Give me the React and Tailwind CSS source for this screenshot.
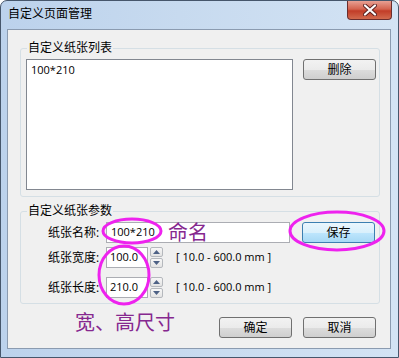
import React from "react";

const font = { fontFamily: '"Open Sans","Noto Sans CJK SC",sans-serif' };

function Btn({ children, primary, className = "" }) {
  return (
    <div
      className={
        "flex items-center justify-center rounded-[3px] border text-[12px] text-black " +
        (primary
          ? "border-[#3c7fb1] bg-[linear-gradient(#eaf6fd_0%,#d9f0fc_50%,#bee6fd_51%,#a7d9f5_100%)] "
          : "border-[#707070] bg-[linear-gradient(#f2f2f2_0%,#ebebeb_50%,#dddddd_51%,#cfcfcf_100%)] ") +
        className
      }
    >
      <span className="leading-none">{children}</span>
    </div>
  );
}

function Spinner() {
  return (
    <div className="ml-[2px] flex h-[21px] w-[13px] flex-col gap-[1px]">
      <div className="flex h-[10px] items-center justify-center rounded-[2px] border border-[#b5b8bd] bg-[linear-gradient(#f7f7f7,#e3e3e3)]">
        <svg width="7" height="4" viewBox="0 0 7 4">
          <path d="M0 4 L3.5 0 L7 4 Z" fill="#4d6185" />
        </svg>
      </div>
      <div className="flex h-[10px] items-center justify-center rounded-[2px] border border-[#b5b8bd] bg-[linear-gradient(#f7f7f7,#e3e3e3)]">
        <svg width="7" height="4" viewBox="0 0 7 4">
          <path d="M0 0 L3.5 4 L7 0 Z" fill="#4d6185" />
        </svg>
      </div>
    </div>
  );
}

function Row({ label, children, className = "" }) {
  return (
    <div className={"flex items-center pl-[27px] " + className}>
      <div className="w-[58px] text-[12px] leading-none text-black">{label}</div>
      {children}
    </div>
  );
}

export default function App() {
  return (
    <div className="relative h-[358px] w-[399px] overflow-hidden bg-white" style={font}>
      <div className="flex h-full flex-col rounded-t-[7px] border border-[#46566b] bg-[linear-gradient(90deg,#bcd2ec_0%,#c7daef_45%,#d3e3f4_100%)]">
        <div className="flex h-[28px] items-start justify-between">
          <div className="pl-[7px] pt-[6px] text-[12px] leading-[14px] text-black">自定义页面管理</div>
          <div className="mr-[6px] flex h-[19px] w-[45px] items-center justify-center rounded-b-[4px] border border-t-0 border-[#6b2d2d] bg-[linear-gradient(#e8a093_0%,#d4634f_45%,#c23d28_55%,#d26a4e_100%)]">
            <svg width="14" height="12" viewBox="0 0 14 12">
              <path d="M2 1.5 L12 10.5 M12 1.5 L2 10.5" stroke="#5a2020" strokeWidth="4" strokeLinecap="round" />
              <path d="M2 1.5 L12 10.5 M12 1.5 L2 10.5" stroke="#ffffff" strokeWidth="2.2" strokeLinecap="round" />
            </svg>
          </div>
        </div>
        <div className="ml-[6px] h-[320px] w-[384px] border border-[#8b9bb0] bg-[#f0f0f0]">
          {/* Group 1 */}
          <div className="relative ml-[12px] mt-[18px] h-[149px] w-[360px] rounded-[3px] border border-[#d5dfe5]">
            <div className="absolute left-[6px] top-[-9px] bg-[#f0f0f0] px-[1px] text-[12px] leading-[16px] text-black">
              自定义纸张列表
            </div>
            <div className="flex items-start">
              <div className="ml-[5px] mt-[10px] h-[131px] w-[267px] border border-[#828790] bg-white px-[4px] pt-[3px] text-[11px] leading-[14px] text-black">
                100*210
              </div>
              <Btn className="ml-[10px] mt-[10px] h-[21px] w-[73px]">删除</Btn>
            </div>
          </div>
          {/* Group 2 */}
          <div className="relative ml-[12px] mt-[14px] h-[93px] w-[360px] rounded-[3px] border border-[#d5dfe5]">
            <div className="absolute left-[6px] top-[-9px] bg-[#f0f0f0] px-[1px] text-[12px] leading-[16px] text-black">
              自定义纸张参数
            </div>
            <Row label="纸张名称:" className="mt-[10px]">
              <div className="flex h-[21px] w-[184px] items-center border border-[#abadb3] bg-white pl-[4px] text-[11px] text-black">
                100*210
              </div>
              <Btn primary className="ml-[12px] h-[21px] w-[73px]">保存</Btn>
            </Row>
            <Row label="纸张宽度:" className="mt-[4px]">
              <div className="flex h-[21px] w-[42px] items-center border border-[#abadb3] bg-white pl-[3px] text-[11px] text-black">
                100.0
              </div>
              <Spinner />
              <div className="ml-[13px] text-[11px] text-black">[ 10.0 - 600.0 mm ]</div>
            </Row>
            <Row label="纸张长度:" className="mt-[9px]">
              <div className="flex h-[21px] w-[42px] items-center border border-[#abadb3] bg-white pl-[3px] text-[11px] text-black">
                210.0
              </div>
              <Spinner />
              <div className="ml-[13px] text-[11px] text-black">[ 10.0 - 600.0 mm ]</div>
            </Row>
          </div>
          {/* Buttons */}
          <div className="mt-[13px] flex justify-end gap-[11px] pr-[14px]">
            <Btn className="h-[21px] w-[73px]">确定</Btn>
            <Btn className="h-[21px] w-[73px]">取消</Btn>
          </div>
        </div>
      </div>

      {/* Annotations overlay */}
      <div className="pointer-events-none absolute left-[168px] top-[220px] text-[20px] leading-[24px] text-[#86288f]" style={{ fontFamily: '"Noto Sans CJK SC",sans-serif' }}>
        命名
      </div>
      <div className="pointer-events-none absolute left-[75px] top-[310px] text-[20px] leading-[24px] text-[#86288f]" style={{ fontFamily: '"Noto Sans CJK SC",sans-serif' }}>
        宽、高尺寸
      </div>
      <svg className="pointer-events-none absolute left-0 top-0" width="399" height="358">
        <ellipse cx="132" cy="231" rx="29" ry="12" fill="none" stroke="#ee22ee" strokeWidth="3" />
        <ellipse cx="124" cy="275" rx="25" ry="29" fill="none" stroke="#ee22ee" strokeWidth="3" />
        <ellipse cx="337" cy="231" rx="47" ry="19" fill="none" stroke="#ee22ee" strokeWidth="3" />
      </svg>
    </div>
  );
}
